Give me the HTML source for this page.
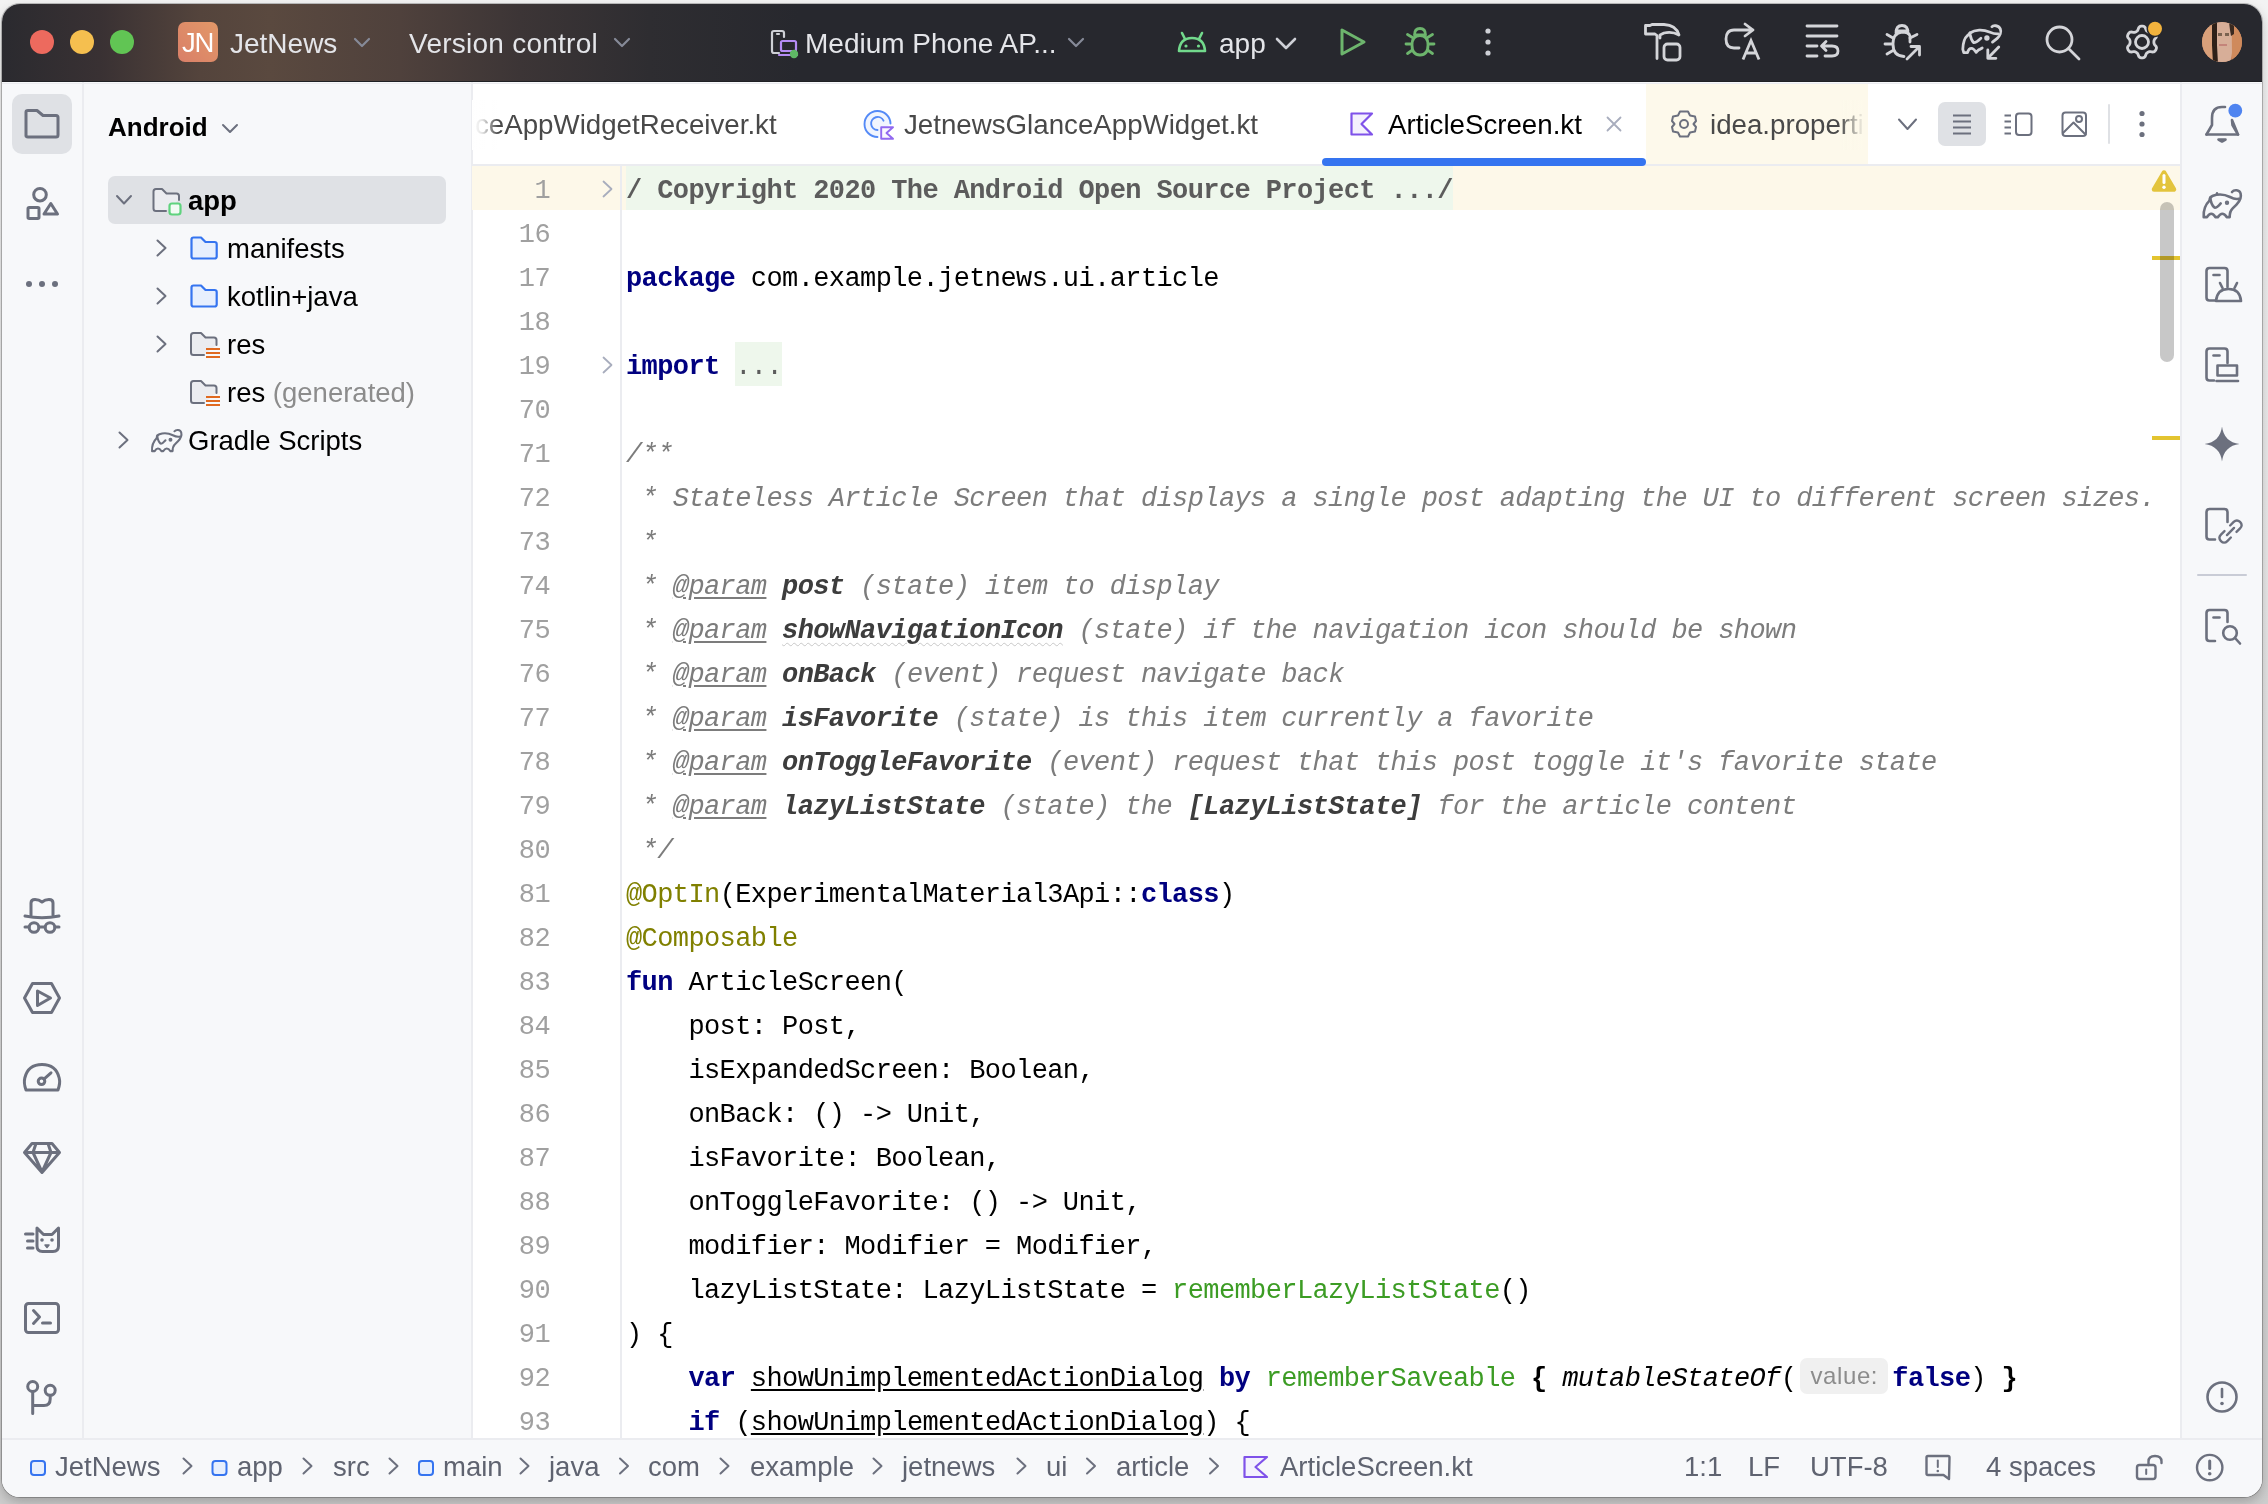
<!DOCTYPE html>
<html><head><meta charset="utf-8">
<style>
html,body{margin:0;padding:0;width:2268px;height:1504px;overflow:hidden}
body{position:relative;background:linear-gradient(180deg,#f3f3f3 0%,#e8e8e8 40%,#cdcdcd 100%);font-family:"Liberation Sans",sans-serif}
.shadow{position:absolute;left:2px;top:4px;width:2260px;height:1493px;border-radius:18px;box-shadow:0 0 0 1px rgba(0,0,0,0.22),0 5px 12px rgba(0,0,0,0.22)}
.win{position:absolute;left:0;top:0;width:2268px;height:1504px;clip-path:inset(4px 6px 7px 2px round 18px);background:#f7f8fa}
.a{position:absolute}
.t{position:absolute;white-space:pre;line-height:1;will-change:transform}
svg{position:absolute;overflow:visible}
/* title bar */
.tb{left:0;top:0;width:2268px;height:82px;background:linear-gradient(90deg,#2a2a2f 0px,#393133 100px,#54443c 200px,#5a493f 270px,#4f413c 400px,#3c3536 520px,#2e2d31 650px,#27282e 800px)}
.tbglow{left:0;top:0;width:1000px;height:82px;background:radial-gradient(ellipse 300px 160px at 240px 30px,rgba(120,88,66,0.75),rgba(60,48,44,0.35) 60%,rgba(43,45,48,0) 100%)}
.ttext{color:#e4e5e9;font-size:28px}
/* panels */
.strip{background:#f7f8fa}
.bd{background:#ebecf0}
.editor{left:473px;top:83px;width:1708px;height:1355px;background:#fff}
.code{left:626px;font-family:"Liberation Mono",monospace;font-size:27px;letter-spacing:-0.6px;color:#000;line-height:44px;height:44px;padding-top:3px}
.ln{left:450px;width:100px;font-family:"Liberation Mono",monospace;font-size:27px;letter-spacing:-0.6px;color:#a0a0a0;text-align:right;line-height:44px;height:44px;padding-top:3px}
.k{color:#000080;font-weight:bold}
.c{color:#7c7c7c;font-style:italic}
.tag{color:#7c7c7c;font-style:italic;text-decoration:underline;text-underline-offset:3px}
.pn{color:#3d3d3d;font-style:italic;font-weight:bold}
.pnw{color:#3d3d3d;font-style:italic;font-weight:bold;text-decoration:underline wavy #c8c8c8;text-decoration-thickness:1px;text-underline-offset:4px}
.an{color:#808000}
.g{color:#3c9c24}
.u{text-decoration:underline;text-underline-offset:3px}
.b{font-weight:bold}
.i{font-style:italic}
.fold{color:#5c5c5c;font-weight:bold}
.dots{color:#5c5c5c}
.inlay{display:inline-block;width:88px;margin:0 4px;height:36px;line-height:36px;border-radius:7px;background:#f0f0f0;color:#8c8c8c;font-family:"Liberation Sans",sans-serif;font-size:24px;letter-spacing:0.6px;text-align:center;vertical-align:2px}
.tree{font-size:27.5px;color:#000}
.tab{font-size:27.7px;color:#494949}
.sb{color:#5f6370;font-size:27.5px;top:1452.5px}
</style></head><body>
<div class="shadow"></div>
<div class="win">
  <!-- title bar -->
  <div class="a tb"></div>
  <div class="a" style="left:168px;top:12px;width:0;height:0"></div>
  <div class="a" style="left:178px;top:22px;width:40px;height:40px;border-radius:7px;background:linear-gradient(45deg,#d97f68,#e39868)"></div>
  <div class="t" style="left:181.5px;top:28.5px;font-size:27.5px;color:#fff;letter-spacing:-1.2px">JN</div>
  <div class="t ttext" style="left:230px;top:30px">JetNews</div>
  <div class="t ttext" style="left:409px;top:30px;letter-spacing:0.25px">Version control</div>
  <div class="t ttext" style="left:805px;top:30px">Medium Phone AP...</div>
  <div class="t ttext" style="left:1219px;top:30px">app</div>
  <svg width="2268" height="90" style="left:0;top:0" fill="none" stroke-linecap="round" stroke-linejoin="round">
    <circle cx="42" cy="42" r="12" fill="#ed6a5e"/>
    <circle cx="82" cy="42" r="12" fill="#f5bf4f"/>
    <circle cx="122" cy="42" r="12" fill="#61c554"/>
    <g stroke="#868a98" stroke-width="2.2">
      <path d="M355 39 L362 46 L369 39"/>
      <path d="M615 39 L622 46 L629 39"/>
      <path d="M1069 39 L1076 46 L1083 39"/>
    </g>
    <path d="M1277 39 L1286 48 L1295 39" stroke="#ced0d6" stroke-width="2.6"/>
    <!-- device icon -->
    <g stroke="#ced0d6" stroke-width="2.2">
      <path d="M779 53 L774 53 Q772 53 772 51 L772 33 Q772 31 774 31 L782 31 Q784 31 784 33 L784 37"/>
      <path d="M777 34 L779 34"/>
    </g>
    <rect x="781" y="41" width="15" height="10" rx="1.5" stroke="#b58cf5" stroke-width="2.2"/>
    <path d="M779 55 L797 55" stroke="#b58cf5" stroke-width="2.2"/>
    <circle cx="794" cy="54" r="4.2" fill="#5fb865"/>
    <!-- android -->
    <g stroke="#72d98c" stroke-width="2.6">
      <path d="M1179 51 Q1180 38 1192 38 Q1204 38 1205 51 Z"/>
      <path d="M1182 33 L1185 39 M1202 33 L1199 39"/>
    </g>
    <circle cx="1186" cy="46" r="1.6" fill="#72d98c"/><circle cx="1198.5" cy="46" r="1.6" fill="#72d98c"/>
    <!-- run -->
    <path d="M1342 30 L1342 54 L1364 42 Z" stroke="#6db56d" stroke-width="3"/>
    <!-- debug bug -->
    <g stroke="#6db56d" stroke-width="2.8">
      <path d="M1414.5 35 Q1414.5 28.5 1420 28.5 Q1425.5 28.5 1425.5 35 Z"/>
      <path d="M1420 35.5 Q1428 35.5 1428 45 Q1428 55 1420 55 Q1412 55 1412 45 Q1412 35.5 1420 35.5 Z"/>
      <path d="M1407.5 34.5 L1412.5 37.5 M1432.5 34.5 L1427.5 37.5 M1406 44 L1411.5 44 M1434 44 L1428.5 44 M1407.5 53.5 L1412.5 50 M1432.5 53.5 L1427.5 50"/>
    </g>
    <!-- more dots -->
    <g fill="#ced0d6"><circle cx="1488" cy="31" r="2.6"/><circle cx="1488" cy="42" r="2.6"/><circle cx="1488" cy="53" r="2.6"/></g>
    <g stroke="#d4d5d9" stroke-width="2.8">
      <!-- hammer -->
      <path d="M1645.5 25.5 L1645.5 34 L1655 34 L1657 35.5 L1657 58.5 M1660 36 L1660 38 M1645.5 25.5 L1650 25.5 L1652 24.5 L1664 24.5 Q1676 25 1679 35 Q1672 31 1664 33 L1660 35"/>
      <rect x="1664" y="44" width="16" height="16" rx="3.5"/>
      <!-- translate -->
      <path d="M1739 48 L1734 48 Q1726 48 1726 39 Q1726 30 1734 30 L1753 30 M1745 24 L1753 30 L1745 36"/>
      <path d="M1743 59.5 L1751 40.5 L1759 59.5 M1746 53 L1756 53" stroke-linecap="butt" stroke-linejoin="miter"/>
      <!-- lines wrap -->
      <path d="M1807 26 L1837 26 M1807 36 L1837 36 M1807 46 L1817 46 M1807 56 L1817 56 M1825 56 L1832 56 Q1838 56 1838 51 Q1838 46 1832 46 L1822 46 M1826 41.5 L1821.5 46 L1826 50.5"/>
      <!-- bug with arrow -->
      <path d="M1896 33 Q1896 25.5 1902 25.5 Q1908 25.5 1908 33 M1896 31 L1908 31"/>
      <path d="M1910 42 L1910 36 Q1909 32 1902 32 Q1893 33 1893 44 Q1893 56 1904 56.5"/>
      <path d="M1887 34.5 L1893 38 M1885 44 L1892 44 M1887 54 L1893 50.5 M1917 34.5 L1910 38"/>
      <path d="M1907 59 L1919 47 M1911 46.5 L1919.5 46.5 L1919.5 55"/>
      <!-- elephant arrow -->
      <g transform="translate(1955,18)">
      <path d="M36.9 8.75 C38 7.3 43.5 6.8 45.3 10.9 C46.6 14 45 18 42.2 20.3 L37.5 24.1"/>
      <path d="M15 15 C20 11.5 28 11.2 34.4 14 C38 15.5 40.5 16.2 43.1 15.9"/>
      <path d="M15 15 C14.5 16 13.5 16.8 12.5 17.5 C9.5 20 8 25 7.8 31.25 L8.75 34.7 L12.5 34.7 C13.2 32 14.5 30.3 16.5 30.3 C18.5 30.3 20 32.5 21.25 34.4 C22.5 33 23.5 31.25 25 31.25 L27.2 30"/>
      <path d="M15 16 C15.6 19 16 22 18.75 24.7 C21 25 23.5 22.5 25.9 20.3"/>
      <path d="M43.75 29 L32.8 40.3 M32.8 31.9 L32.8 40.3 L40.9 40.3"/>
      </g>
      <circle cx="1986.9" cy="38" r="1.3" fill="#d4d5d9"/>
      <!-- search -->
      <circle cx="2059.5" cy="39.5" r="12.5"/>
      <path d="M2069 49 L2079 59"/>
      <!-- gear -->
      <path d="M2153.9 42.0 L2153.9 42.6 L2154.0 43.3 L2154.2 43.9 L2154.6 44.7 L2155.4 45.6 L2156.2 46.6 L2156.5 47.6 L2156.4 48.4 L2156.1 49.2 L2155.8 50.0 L2155.3 50.6 L2154.8 51.3 L2154.0 51.8 L2153.1 52.0 L2151.8 51.8 L2150.6 51.6 L2149.7 51.6 L2149.1 51.7 L2148.5 52.0 L2147.9 52.3 L2147.4 52.6 L2146.9 53.0 L2146.4 53.5 L2146.0 54.3 L2145.6 55.4 L2145.1 56.6 L2144.4 57.3 L2143.6 57.7 L2142.8 57.9 L2142.0 57.9 L2141.2 57.9 L2140.4 57.7 L2139.6 57.3 L2138.9 56.6 L2138.4 55.4 L2138.0 54.3 L2137.6 53.5 L2137.1 53.0 L2136.6 52.6 L2136.1 52.3 L2135.5 52.0 L2134.9 51.7 L2134.3 51.6 L2133.4 51.6 L2132.2 51.8 L2130.9 52.0 L2130.0 51.8 L2129.2 51.3 L2128.7 50.6 L2128.2 50.0 L2127.9 49.2 L2127.6 48.4 L2127.5 47.6 L2127.8 46.6 L2128.6 45.6 L2129.4 44.7 L2129.8 43.9 L2130.0 43.3 L2130.1 42.6 L2130.1 42.0 L2130.1 41.4 L2130.0 40.7 L2129.8 40.1 L2129.4 39.3 L2128.6 38.4 L2127.8 37.4 L2127.5 36.4 L2127.6 35.6 L2127.9 34.8 L2128.2 34.1 L2128.7 33.4 L2129.2 32.7 L2130.0 32.2 L2130.9 32.0 L2132.2 32.2 L2133.4 32.4 L2134.3 32.4 L2134.9 32.3 L2135.5 32.0 L2136.1 31.7 L2136.6 31.4 L2137.1 31.0 L2137.6 30.5 L2138.0 29.7 L2138.4 28.6 L2138.9 27.4 L2139.6 26.7 L2140.4 26.3 L2141.2 26.1 L2142.0 26.1 L2142.8 26.1 L2143.6 26.3 L2144.4 26.7 L2145.1 27.4 L2145.6 28.6 L2146.0 29.7 L2146.4 30.5 L2146.9 31.0 L2147.4 31.4 L2147.9 31.7 L2148.5 32.0 L2149.1 32.3 L2149.7 32.4 L2150.6 32.4 L2151.8 32.2 L2153.1 32.0 L2154.0 32.2 L2154.8 32.7 L2155.3 33.4 L2155.8 34.1 L2156.1 34.8 L2156.4 35.6 L2156.5 36.4 L2156.2 37.4 L2155.4 38.4 L2154.6 39.3 L2154.2 40.1 L2154.0 40.7 L2153.9 41.4 Z"/>
      <circle cx="2142" cy="42" r="6.5"/>
    </g>
    <circle cx="2155" cy="28.8" r="8.5" fill="#27282e"/>
    <circle cx="2155" cy="28.8" r="7" fill="#f2b33d"/>
    <!-- avatar -->
    <defs>
      <radialGradient id="av" cx="0.5" cy="0.45" r="0.6"><stop offset="0" stop-color="#e0ad8c"/><stop offset="0.7" stop-color="#d4956b"/><stop offset="1" stop-color="#b87450"/></radialGradient>
      <clipPath id="avc"><circle cx="2222" cy="42" r="20"/></clipPath>
    </defs>
    <circle cx="2222" cy="42" r="20" fill="url(#av)"/>
    <g clip-path="url(#avc)">
      <rect x="2202" y="22" width="12" height="40" fill="#d9a07a"/>
      <rect x="2232" y="22" width="12" height="40" fill="#cf8a5c"/>
      <path d="M2216 22 L2231 22 L2232 52 L2230 64 L2216 64 Z" fill="#d7ae98"/>
      <rect x="2218" y="33" width="4" height="3" fill="#7a6250"/><rect x="2225" y="33" width="4" height="3" fill="#7a6250"/>
      <rect x="2219" y="44" width="8" height="2" fill="#c4847a"/>
      <path d="M2212 22 L2217 22 L2217 45 L2218 64 L2213 64 L2212 45 Z" fill="#2e2018"/>
      <path d="M2229 22 L2234 22 L2234 34 L2231 36 L2230 30 Z" fill="#3a2a20"/>
    </g>
  </svg>

  <!-- left strip -->
  <div class="a strip" style="left:0;top:82px;width:82px;height:1356px"></div>
  <div class="a bd" style="left:82px;top:82px;width:2px;height:1356px"></div>
  <!-- project panel -->
  <div class="a strip" style="left:84px;top:82px;width:387px;height:1356px"></div>
  <div class="a bd" style="left:471px;top:82px;width:2px;height:1356px"></div>
  <!-- editor -->
  <div class="a editor"></div>
  <div class="a bd" style="left:473px;top:164px;width:1708px;height:2px"></div>
  <!-- right strip -->
  <div class="a bd" style="left:2180px;top:82px;width:2px;height:1356px"></div>
  <div class="a strip" style="left:2182px;top:82px;width:86px;height:1356px"></div>
  <!-- status bar -->
  <div class="a bd" style="left:0;top:1438px;width:2268px;height:2px"></div>
  <div class="a strip" style="left:0;top:1440px;width:2268px;height:64px"></div>
  <div class="a" style="left:0;top:81px;width:2268px;height:1px;background:#1f2024"></div>
  <div class="a bd" style="left:0;top:83px;width:2268px;height:1px"></div>

  <!-- editor backgrounds -->
  <div class="a" style="left:472px;top:166px;width:1708px;height:44px;background:#fdf8e9"></div>
  <div class="a" style="left:626px;top:166px;width:827px;height:44px;background:#eef7ec"></div>
  <div class="a" style="left:735px;top:342px;width:47px;height:44px;background:#eef7ec"></div>
  <div class="a bd" style="left:620px;top:166px;width:2px;height:1272px"></div>
  <!-- CODE START -->
<div class="t ln" style="top:166px">1</div>
<div class="t code" style="top:166px"><span class="fold">/ Copyright 2020 The Android Open Source Project .../</span></div>
<div class="t ln" style="top:210px">16</div>
<div class="t ln" style="top:254px">17</div>
<div class="t code" style="top:254px"><span class="k">package</span> com.example.jetnews.ui.article</div>
<div class="t ln" style="top:298px">18</div>
<div class="t ln" style="top:342px">19</div>
<div class="t code" style="top:342px"><span class="k">import</span> <span class="dots">...</span></div>
<div class="t ln" style="top:386px">70</div>
<div class="t ln" style="top:430px">71</div>
<div class="t code" style="top:430px"><span class="c">/**</span></div>
<div class="t ln" style="top:474px">72</div>
<div class="t code" style="top:474px"><span class="c"> * Stateless Article Screen that displays a single post adapting the UI to different screen sizes.</span></div>
<div class="t ln" style="top:518px">73</div>
<div class="t code" style="top:518px"><span class="c"> *</span></div>
<div class="t ln" style="top:562px">74</div>
<div class="t code" style="top:562px"><span class="c"> * </span><span class="tag">@param</span><span class="c"> </span><span class="pn">post</span><span class="c"> (state) item to display</span></div>
<div class="t ln" style="top:606px">75</div>
<div class="t code" style="top:606px"><span class="c"> * </span><span class="tag">@param</span><span class="c"> </span><span class="pnw">showNavigationIcon</span><span class="c"> (state) if the navigation icon should be shown</span></div>
<div class="t ln" style="top:650px">76</div>
<div class="t code" style="top:650px"><span class="c"> * </span><span class="tag">@param</span><span class="c"> </span><span class="pn">onBack</span><span class="c"> (event) request navigate back</span></div>
<div class="t ln" style="top:694px">77</div>
<div class="t code" style="top:694px"><span class="c"> * </span><span class="tag">@param</span><span class="c"> </span><span class="pn">isFavorite</span><span class="c"> (state) is this item currently a favorite</span></div>
<div class="t ln" style="top:738px">78</div>
<div class="t code" style="top:738px"><span class="c"> * </span><span class="tag">@param</span><span class="c"> </span><span class="pn">onToggleFavorite</span><span class="c"> (event) request that this post toggle it&#x27;s favorite state</span></div>
<div class="t ln" style="top:782px">79</div>
<div class="t code" style="top:782px"><span class="c"> * </span><span class="tag">@param</span><span class="c"> </span><span class="pn">lazyListState</span><span class="c"> (state) the </span><span class="pn">[LazyListState]</span><span class="c"> for the article content</span></div>
<div class="t ln" style="top:826px">80</div>
<div class="t code" style="top:826px"><span class="c"> */</span></div>
<div class="t ln" style="top:870px">81</div>
<div class="t code" style="top:870px"><span class="an">@OptIn</span>(ExperimentalMaterial3Api::<span class="k">class</span>)</div>
<div class="t ln" style="top:914px">82</div>
<div class="t code" style="top:914px"><span class="an">@Composable</span></div>
<div class="t ln" style="top:958px">83</div>
<div class="t code" style="top:958px"><span class="k">fun</span> ArticleScreen(</div>
<div class="t ln" style="top:1002px">84</div>
<div class="t code" style="top:1002px">    post: Post,</div>
<div class="t ln" style="top:1046px">85</div>
<div class="t code" style="top:1046px">    isExpandedScreen: Boolean,</div>
<div class="t ln" style="top:1090px">86</div>
<div class="t code" style="top:1090px">    onBack: () -&gt; Unit,</div>
<div class="t ln" style="top:1134px">87</div>
<div class="t code" style="top:1134px">    isFavorite: Boolean,</div>
<div class="t ln" style="top:1178px">88</div>
<div class="t code" style="top:1178px">    onToggleFavorite: () -&gt; Unit,</div>
<div class="t ln" style="top:1222px">89</div>
<div class="t code" style="top:1222px">    modifier: Modifier = Modifier,</div>
<div class="t ln" style="top:1266px">90</div>
<div class="t code" style="top:1266px">    lazyListState: LazyListState = <span class="g">rememberLazyListState</span>()</div>
<div class="t ln" style="top:1310px">91</div>
<div class="t code" style="top:1310px">) {</div>
<div class="t ln" style="top:1354px">92</div>
<div class="t code" style="top:1354px">    <span class="k">var</span> <span class="u">showUnimplementedActionDialog</span> <span class="k">by</span> <span class="g">rememberSaveable</span> <span class="b">{</span> <span class="i">mutableStateOf</span>(<span class="inlay">value:</span><span class="k">false</span>) <span class="b">}</span></div>
<div class="t ln" style="top:1398px">93</div>
<div class="t code" style="top:1398px">    <span class="k">if</span> (<span class="u">showUnimplementedActionDialog</span>) {</div>
  <!-- CODE END -->
  <!-- tabs -->
  <div class="a" style="left:1646px;top:84px;width:222px;height:80px;background:#fdf9eb"></div>
  <div class="t tab" style="left:475px;top:111px">ceAppWidgetReceiver.kt</div>
  <div class="a" style="left:472px;top:100px;width:26px;height:50px;background:linear-gradient(90deg,#fff 0%,rgba(255,255,255,0.85) 40%,rgba(255,255,255,0) 100%)"></div>
  <div class="t tab" style="left:904px;top:111px">JetnewsGlanceAppWidget.kt</div>
  <div class="t tab" style="left:1388px;top:111px;color:#000">ArticleScreen.kt</div>
  <div class="t tab" style="left:1710px;top:111px">idea.properti</div>
  <div class="a" style="left:1840px;top:100px;width:28px;height:50px;background:linear-gradient(90deg,rgba(253,249,235,0) 0%,#fdf9eb 85%)"></div>
  <div class="a" style="left:1322px;top:158px;width:324px;height:8px;border-radius:4px;background:#3574f0"></div>
  <div class="a" style="left:1938px;top:102px;width:48px;height:44px;border-radius:7px;background:#dfe1e5"></div>

  <!-- status bar content -->
  <div class="t sb" style="left:55px">JetNews</div>
  <div class="t sb" style="left:237px">app</div>
  <div class="t sb" style="left:333px">src</div>
  <div class="t sb" style="left:443px">main</div>
  <div class="t sb" style="left:549px">java</div>
  <div class="t sb" style="left:648px">com</div>
  <div class="t sb" style="left:750px">example</div>
  <div class="t sb" style="left:902px">jetnews</div>
  <div class="t sb" style="left:1046px">ui</div>
  <div class="t sb" style="left:1116px">article</div>
  <div class="t sb" style="left:1280px">ArticleScreen.kt</div>
  <div class="t sb" style="left:1684px">1:1</div>
  <div class="t sb" style="left:1748px">LF</div>
  <div class="t sb" style="left:1810px">UTF-8</div>
  <div class="t sb" style="left:1986px">4 spaces</div>

  <!-- project panel content -->
  <div class="a" style="left:12px;top:94px;width:60px;height:60px;border-radius:10px;background:#dfe1e5"></div>
  <div class="a" style="left:108px;top:176px;width:338px;height:48px;border-radius:7px;background:#dfe1e5"></div>
  <div class="t" style="left:108px;top:114px;font-size:26px;font-weight:bold;color:#000">Android</div>
  <div class="t tree" style="left:188px;top:187px;font-weight:bold">app</div>
  <div class="t tree" style="left:227px;top:235px">manifests</div>
  <div class="t tree" style="left:227px;top:283px">kotlin+java</div>
  <div class="t tree" style="left:227px;top:331px">res</div>
  <div class="t tree" style="left:227px;top:379px">res <span style="color:#8c8c8c">(generated)</span></div>
  <div class="t tree" style="left:188px;top:427px">Gradle Scripts</div>

  <svg width="2268" height="1504" style="left:0;top:0" fill="none" stroke-linecap="round" stroke-linejoin="round">
    <g stroke="#6c707e" stroke-width="3">
      <!-- folder tool -->
      <path d="M26 136 L26 112 Q26 110.5 28 110.5 L37 110.5 L43 115.5 L56 115.5 Q58 115.5 58 117.5 L58 135 Q58 137 56 137 L28 137 Q26 137 26 135"/>
      <!-- shapes -->
      <circle cx="40" cy="194.7" r="6.3"/>
      <rect x="28" y="207.5" width="11" height="11" rx="1.2"/>
      <path d="M50.8 203.5 L57.5 214 L44 214 Z"/>
      <!-- hat -->
      <path d="M31 915 L31 903 Q31 899.5 35 899.5 Q39 899.5 42 902 Q45 899.5 49 899.5 Q53 899.5 53 903 L53 915"/>
      <path d="M25 916 Q42 919.5 59 916"/>
      <circle cx="34" cy="927.5" r="4.8"/><circle cx="50" cy="927.5" r="4.8"/>
      <path d="M39 927 L45 927 M25 927 L29 927 M55 927 L59 927"/>
      <!-- hexagon play -->
      <path d="M24.5 998 L32.5 983.5 L51.5 983.5 L59.5 998 L51.5 1012.5 L32.5 1012.5 Z"/>
      <path d="M37.5 991 L37.5 1005.5 L50.5 998 Z"/>
      <!-- gauge -->
      <path d="M26 1090 Q23.5 1083 24.8 1078 Q28 1064.5 42 1064.5 Q56 1064.5 59.2 1078 Q60.5 1083 58 1090 Z"/>
      <circle cx="41.5" cy="1081.3" r="3.3"/>
      <path d="M44.2 1078.8 L51 1072.8"/>
      <!-- diamond -->
      <path d="M32 1143.5 L52 1143.5 L59.5 1152.5 L42 1172.5 L24.5 1152.5 Z M24.5 1152.5 L59.5 1152.5 M36 1143.5 L33 1152.5 L42 1172 L51 1152.5 L48 1143.5"/>
      <!-- cat -->
      <path d="M37 1228 L37 1246 Q37 1251.5 42.5 1251.5 L53 1251.5 Q58.5 1251.5 58.5 1246 L58.5 1228 L52 1234.5 L43.5 1234.5 Z"/>
      <path d="M25.5 1234 L33 1234 M27.5 1241 L33 1241 M27.5 1248 L33 1248"/>
      <!-- terminal -->
      <rect x="25.5" y="1303.5" width="33" height="29" rx="3"/>
      <path d="M33.5 1310.5 L39.5 1317 L33.5 1323.5 M42.5 1323 L50.5 1323"/>
      <!-- git -->
      <circle cx="32.7" cy="1386.5" r="5"/><circle cx="50.2" cy="1390.3" r="5"/>
      <path d="M32.7 1391.5 L32.7 1413.5 M32.7 1405.5 L44 1405.5 Q50.2 1405.5 50.2 1399 L50.2 1395.5"/>
    </g>
    <g fill="#6c707e">
      <circle cx="29" cy="284" r="3"/><circle cx="42" cy="284" r="3"/><circle cx="55" cy="284" r="3"/>
      <circle cx="42" cy="1240" r="1.8"/><circle cx="52" cy="1240" r="1.8"/>
      <path d="M45 1245 L49 1245 L47 1247.5 Z" stroke="#6c707e" stroke-width="1.5"/>
    </g>
    <!-- tree chevrons -->
    <g stroke="#6c707e" stroke-width="2">
      <path d="M117 196 L124 203.5 L131 196"/>
      <path d="M157.5 240.5 L165.5 248 L157.5 255.5"/>
      <path d="M157.5 288.5 L165.5 296 L157.5 303.5"/>
      <path d="M157.5 336.5 L165.5 344 L157.5 351.5"/>
      <path d="M119.5 432.5 L127.5 440 L119.5 447.5"/>
      <path d="M223 125 L230 132 L237 125"/>
    </g>
    <!-- app folder -->
    <path d="M166 211 L156 211 Q153.5 211 153.5 208.5 L153.5 191.5 Q153.5 189 156 189 L162 189 L166.5 193.5 L176.5 193.5 Q179 193.5 179 196 L179 200" stroke="#6c707e" stroke-width="2" fill="#ebecf0"/>
    <rect x="169.5" y="203.5" width="11" height="11" rx="2.5" stroke="#5fd37e" stroke-width="2.2" fill="#f2fbf4"/>
    <!-- blue folders -->
    <g stroke="#3574f0" stroke-width="2.2" fill="#e7effd">
      <path d="M191.5 256.5 L191.5 239.5 Q191.5 237.5 193.5 237.5 L201 237.5 L205.5 242 L214.5 242 Q216.7 242 216.7 244 L216.7 256.5 Q216.7 258.5 214.5 258.5 L193.5 258.5 Q191.5 258.5 191.5 256.5 Z"/>
      <path d="M191.5 304.5 L191.5 287.5 Q191.5 285.5 193.5 285.5 L201 285.5 L205.5 290 L214.5 290 Q216.7 290 216.7 292 L216.7 304.5 Q216.7 306.5 214.5 306.5 L193.5 306.5 Q191.5 306.5 191.5 304.5 Z"/>
    </g>
    <!-- res folders -->
    <g stroke="#6c707e" stroke-width="2" fill="#ebecf0">
      <path d="M204 355 L193.5 355 Q191 355 191 352.5 L191 335.5 Q191 333 193.5 333 L201 333 L205.5 337.5 L214 337.5 Q216.5 337.5 216.5 340 L216.5 345"/>
      <path d="M204 403 L193.5 403 Q191 403 191 400.5 L191 383.5 Q191 381 193.5 381 L201 381 L205.5 385.5 L214 385.5 Q216.5 385.5 216.5 388 L216.5 393"/>
    </g>
    <g stroke="#e0691f" stroke-width="2.2" stroke-linecap="butt">
      <path d="M206 349 L220 349 M206 353 L220 353 M206 357 L220 357"/>
      <path d="M206 397 L220 397 M206 401 L220 401 M206 405 L220 405"/>
    </g>
    <!-- gradle elephant tree -->
    <g stroke="#6c707e" stroke-width="2.6" transform="translate(145.2,421.8) scale(0.79)"><path d="M37 12 C39 9.5 44.5 9.5 45.6 13.5 C46.8 18 44 22 41.5 24.6 L37.4 28.7 C35.5 30.5 34.7 33.5 34.7 37.1 L31.7 37.1 C30.5 35 29 33.8 27.2 33.8 C25.3 33.8 24 35.5 22.8 37.1 L20.4 37.1 C19.2 35 17.8 33.8 16.2 33.8 C14.5 33.8 13 35.5 12 37.1 L8.7 37.1 C8.2 31 9.5 25.5 14.7 20.4"/>
        <path d="M14.7 20.4 C14.5 18.5 15.5 16.8 18 15.8 C24 13.5 30 14.5 35 17 C38 18.6 40.5 19.5 43.5 18.8"/>
        <path d="M15.2 17.5 C15.6 21 16.3 25 19.5 27.6 C21.5 28.3 23.5 25.8 25.7 23.4"/>
        <circle cx="32" cy="22.8" r="1.2" fill="#6c707e"/></g>
    <!-- tab icons -->
    <path d="M877.5 137 A13 13 0 1 1 890.5 123.5" stroke="#548af7" stroke-width="1.9" fill="#f1f5fe"/>
    <path d="M877.5 130 A6.5 6.5 0 1 1 883.5 120.7" stroke="#548af7" stroke-width="1.9"/>
    <path d="M881.2 127.2 L893 127.2 L886.5 133 L893 138.8 L881.2 138.8 Z" stroke="#9269f0" stroke-width="1.9" fill="#faf8fe" stroke-width="1.9"/>
    <path d="M1351.5 113.5 L1372 113.5 L1361.5 124 L1372 134.5 L1351.5 134.5 Z" stroke="#7f52e9" stroke-width="2.2" fill="#f4f1fd"/>
    <path d="M1607.5 117.5 L1620.5 130.5 M1620.5 117.5 L1607.5 130.5" stroke="#a8adbd" stroke-width="1.8"/>
    <g stroke="#6c707e" stroke-width="2">
      <path d="M1680 111.5 L1688 111.5 L1690 115.5 L1695 116.5 L1696 121 L1693.5 124 L1696 127 L1695 131.5 L1690 132.5 L1688 136.5 L1680 136.5 L1678 132.5 L1673 131.5 L1672 127 L1674.5 124 L1672 121 L1673 116.5 L1678 115.5 Z"/>
      <circle cx="1684" cy="124" r="4"/>
      <path d="M1899 119.5 L1907.5 129 L1916 119.5"/>
      <path d="M1953 115.5 L1971 115.5 M1953 121.5 L1971 121.5 M1953 127.5 L1971 127.5 M1953 133.5 L1971 133.5" stroke-width="1.8" stroke-linecap="butt"/>
      <path d="M2004.5 115.5 L2011 115.5 M2004.5 121.5 L2011 121.5 M2004.5 127.5 L2011 127.5 M2004.5 133.5 L2011 133.5" stroke-width="1.8" stroke-linecap="butt"/>
      <rect x="2016" y="113.5" width="15.5" height="21.5" rx="3"/>
      <rect x="2062.5" y="112.5" width="23.5" height="23.5" rx="3"/>
      <path d="M2063 133 L2073.5 122.5 L2085.5 134.5" />
      <circle cx="2079" cy="119" r="3"/>
    </g>
    <path d="M2109 105 L2109 143" stroke="#dfe1e5" stroke-width="2"/>
    <g fill="#6c707e"><circle cx="2142" cy="113.5" r="2.6"/><circle cx="2142" cy="124" r="2.6"/><circle cx="2142" cy="134.5" r="2.6"/></g>
    <!-- right strip icons -->
    <g stroke="#6c707e" stroke-width="2.6">
      <path d="M2206.5 134.5 L2212 125 L2212 118 Q2212 107 2222 107 L2225 107 M2232 120 L2232.5 125 L2238 134.5 Z"/>
      <path d="M2206.5 134.5 L2238 134.5"/>
      <path d="M2218.5 139.5 L2225.5 139.5 L2222 141.5 Z" fill="#6c707e"/>
      <!-- elephant -->
      <g transform="translate(2195,180)"><path d="M37 12 C39 9.5 44.5 9.5 45.6 13.5 C46.8 18 44 22 41.5 24.6 L37.4 28.7 C35.5 30.5 34.7 33.5 34.7 37.1 L31.7 37.1 C30.5 35 29 33.8 27.2 33.8 C25.3 33.8 24 35.5 22.8 37.1 L20.4 37.1 C19.2 35 17.8 33.8 16.2 33.8 C14.5 33.8 13 35.5 12 37.1 L8.7 37.1 C8.2 31 9.5 25.5 14.7 20.4"/>
        <path d="M14.7 20.4 C14.5 18.5 15.5 16.8 18 15.8 C24 13.5 30 14.5 35 17 C38 18.6 40.5 19.5 43.5 18.8"/>
        <path d="M15.2 17.5 C15.6 21 16.3 25 19.5 27.6 C21.5 28.3 23.5 25.8 25.7 23.4"/>
        <circle cx="32" cy="22.8" r="0.9" fill="#6c707e"/></g>
      <!-- phone android -->
      <path d="M2215 300.5 L2209.5 300.5 Q2206.5 300.5 2206.5 297.5 L2206.5 271 Q2206.5 268 2209.5 268 L2224.5 268 Q2227.5 268 2227.5 271 L2227.5 287"/>
      <path d="M2213.5 275 L2219.5 275"/>
      <path d="M2216 301 Q2217 289 2228.5 289 Q2240 289 2241 301 Z"/>
      <path d="M2220 283 L2222.5 288 M2237 283 L2234.5 288"/>
      <!-- phone laptop -->
      <path d="M2214 380.5 L2209.5 380.5 Q2206.5 380.5 2206.5 377.5 L2206.5 351.5 Q2206.5 348.5 2209.5 348.5 L2224.5 348.5 Q2227.5 348.5 2227.5 351.5 L2227.5 363"/>
      <path d="M2213.5 355.5 L2219.5 355.5"/>
      <rect x="2217.5" y="365.5" width="19.5" height="10"/>
      <path d="M2216.5 381 L2238 381"/>
      <!-- phone link -->
      <path d="M2215 539.5 L2209.5 539.5 Q2206.5 539.5 2206.5 536.5 L2206.5 512 Q2206.5 509 2209.5 509 L2224.5 509 Q2227.5 509 2227.5 512 L2227.5 522"/>
      <path transform="translate(2230.5,531.5) rotate(-45)" d="M-4 -4.5 L-9 -4.5 Q-13.5 -4.5 -13.5 0 Q-13.5 4.5 -9 4.5 L-4 4.5 M4 -4.5 L9 -4.5 Q13.5 -4.5 13.5 0 Q13.5 4.5 9 4.5 L4 4.5 M-5 0 L5 0" stroke-width="2.4"/>
      <!-- phone search -->
      <path d="M2215 641 L2209.5 641 Q2206.5 641 2206.5 638 L2206.5 613 Q2206.5 610 2209.5 610 L2224.5 610 Q2227.5 610 2227.5 613 L2227.5 622"/>
      <path d="M2213.5 617.5 L2219.5 617.5"/>
      <circle cx="2230" cy="633" r="6.8"/>
      <path d="M2235 638 L2240 643.5"/>
      <!-- bottom right exclamation -->
      <circle cx="2222" cy="1397" r="14.5"/>
      <path d="M2222 1389 L2222 1397"/>
    </g>
    <circle cx="2235.3" cy="110.7" r="6.9" fill="#4f84f0"/>
    <circle cx="2217" cy="193.3" r="1.2" fill="#6c707e"/>
    <circle cx="2222" cy="1403.5" r="1.8" fill="#6c707e"/>
    <path d="M2222 426.5 Q2224 442 2239.5 444 Q2224 446 2222 461.5 Q2220 446 2204.5 444 Q2220 442 2222 426.5 Z" fill="#6c707e"/>
    <path d="M2198 575 L2246 575" stroke="#c9ccd6" stroke-width="2"/>
    <!-- status bar icons -->
    <g stroke="#3574f0" stroke-width="2" fill="#e7effd">
      <rect x="31" y="1461" width="14" height="14" rx="3"/>
      <rect x="212.5" y="1461" width="14" height="14" rx="3"/>
      <rect x="419" y="1461" width="14" height="14" rx="3"/>
    </g>
    <g stroke="#6c707e" stroke-width="2">
      <path d="M183.5 1458.5 L191.5 1466 L183.5 1473.5"/>
      <path d="M303.5 1458.5 L311.5 1466 L303.5 1473.5"/>
      <path d="M389.5 1458.5 L397.5 1466 L389.5 1473.5"/>
      <path d="M520.5 1458.5 L528.5 1466 L520.5 1473.5"/>
      <path d="M620 1458.5 L628 1466 L620 1473.5"/>
      <path d="M720.5 1458.5 L728.5 1466 L720.5 1473.5"/>
      <path d="M873.5 1458.5 L881.5 1466 L873.5 1473.5"/>
      <path d="M1017.5 1458.5 L1025.5 1466 L1017.5 1473.5"/>
      <path d="M1087 1458.5 L1095 1466 L1087 1473.5"/>
      <path d="M1210 1458.5 L1218 1466 L1210 1473.5"/>
    </g>
    <path d="M1244.5 1457 L1267 1457 L1255.5 1467 L1267 1477 L1244.5 1477 Z" stroke="#7f52e9" stroke-width="2.2" fill="#f4f1fd"/>
    <g stroke="#6c707e" stroke-width="2.4">
      <path d="M1949 1479 L1943.5 1475 L1928 1475 Q1926.5 1475 1926.5 1473.5 L1926.5 1457.5 Q1926.5 1456 1928 1456 L1948 1456 Q1949.5 1456 1949.5 1457.5 Z"/>
      <path d="M1937.8 1460.5 L1937.8 1467" stroke-width="2"/>
      <rect x="2137" y="1465" width="18.5" height="14" rx="2.5"/>
      <path d="M2148.5 1465 L2148.5 1461.5 Q2148.5 1456 2155 1456 Q2161.5 1456 2161.5 1461.5 L2161.5 1463"/>
      <path d="M2146.2 1469.5 L2146.2 1474" stroke-width="2"/>
      <circle cx="2209.7" cy="1467.6" r="12.7"/>
      <path d="M2209.7 1461 L2209.7 1468.5" stroke-width="3"/>
    </g>
    <circle cx="1937.8" cy="1471" r="1.3" fill="#6c707e"/>
    <circle cx="2209.7" cy="1473.8" r="1.8" fill="#6c707e"/>
    <!-- gutter fold chevrons -->
    <g stroke="#a8adbd" stroke-width="1.8">
      <path d="M603.5 181.5 L611.5 189 L603.5 196.5"/>
      <path d="M603.5 357.5 L611.5 365 L603.5 372.5"/>
    </g>
    <!-- scrollbar / markers -->
    <rect x="2152" y="256" width="28" height="4" fill="#e3c430"/>
    <rect x="2152" y="436" width="28" height="4" fill="#e3c430"/>
    <rect x="2160" y="202" width="14" height="160" rx="7" fill="rgba(0,0,0,0.215)"/>
    <path d="M2164 172.5 L2174 189.5 L2154 189.5 Z" fill="#e3c43c" stroke="#e3c43c" stroke-width="4.5"/>
    <path d="M2164 175.5 L2164 182.5" stroke="#fff" stroke-width="3"/>
    <circle cx="2164" cy="187.3" r="1.7" fill="#fff"/>
  </svg>
</div>
</body></html>
